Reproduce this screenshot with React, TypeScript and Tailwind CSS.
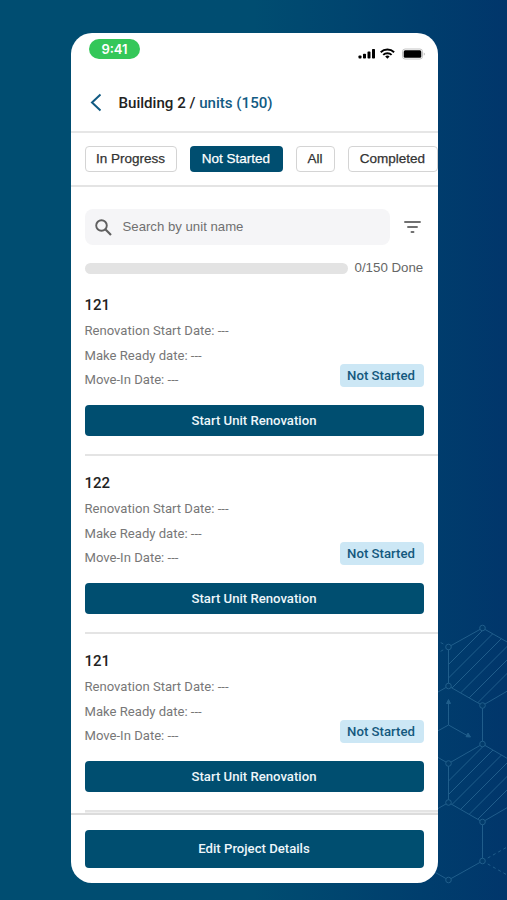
const units = ["121", "122", "121"];

const tabs = [
  { label: "In Progress", size: "w-[92px]" },
  { label: "Not Started", size: "w-[93px]", active: true },
  { label: "All", size: "w-[39px]" },
  { label: "Completed", size: "w-[90px]" },
];

function StatusIcons() {
  return (
    <svg width="68" height="14" viewBox="0 0 68 14" fill="#000">
      {/* Signal */}
      <rect x="0.5" y="8.5" width="3" height="3" rx="0.8" />
      <rect x="5" y="6.8" width="3" height="4.7" rx="0.8" />
      <rect x="9.5" y="4.6" width="3" height="6.9" rx="0.8" />
      <rect x="14" y="2" width="3" height="9.5" rx="0.8" />
      {/* Wifi */}
      <g fill="none" stroke="#000" strokeWidth="1.9">
        <path d="M22.7 5.2a9.6 9.6 0 0 1 13.4 0" />
        <path d="M25.2 7.9a6 6 0 0 1 8.4 0" />
      </g>
      <path d="M27.2 9.6a3.2 3.2 0 0 1 4.4 0l-2.2 2.2z" />
      {/* Battery */}
      <rect x="44.5" y="2" width="20" height="10" rx="2.6" fill="none" stroke="#c4c4c4" />
      <rect x="45.7" y="3.3" width="17.6" height="7.4" rx="1.5" />
      <path d="M65.8 5.4c1.2.5 1.2 2.7 0 3.2z" fill="#a8a8a8" />
    </svg>
  );
}

function Pattern() {
  const nodes = [
    [57.5, 18], [23.5, 37], [23.5, 76], [57.5, 95.5], [57.5, 134],
    [23.5, 153.5], [23.5, 192.5], [57.5, 212], [57.5, 251], [23.5, 270],
  ];
  return (
    <svg
      className="absolute right-0 bottom-0"
      width="82"
      height="290"
      viewBox="0 0 82 290"
      fill="none"
      stroke="#2b6a96"
      strokeWidth="1"
      opacity="0.75"
    >
      <defs>
        <clipPath id="hexTop">
          <path d="M57.5 18 91.5 37V76L57.5 95.5 23.5 76V37z" />
        </clipPath>
        <clipPath id="hexBottom">
          <path d="M57.5 134 91.5 153.5V192.5L57.5 212 23.5 192.5V153.5z" />
        </clipPath>
      </defs>
      <path d="M91 37 57.5 18 23.5 37V76L57.5 95.5 91 76M57.5 95.5V134L91 153.5M57.5 134 23.5 153.5V192.5L57.5 212 91 192.5M57.5 212V251L23.5 270 0 256.5M23.5 76 0 89.5M23.5 153.5 0 140M23.5 192.5 0 206" />
      <path d="M23.5 37 0 23.5M23.5 37 0 50M57.5 251 91 232M57.5 251 91 270" strokeDasharray="3 3" />
      <g clipPath="url(#hexTop)">
        {[78, 91.5, 105, 118.5, 132, 145.5].map((n) => (
          <path key={n} d={`M0 ${n}L100 ${n - 100}`} />
        ))}
      </g>
      <g clipPath="url(#hexBottom)">
        {[194.5, 208, 221.5, 235, 248.5, 262].map((n) => (
          <path key={n} d={`M0 ${n}L100 ${n - 100}`} />
        ))}
      </g>
      <path d="M23.5 92V115L43 126M23.5 115 0 128" />
      <path d="M23.5 89.5 21.5 93.5H25.5zM45.5 127 41 126.7 43 123z" fill="#2b6a96" />
      {nodes.map(([x, y]) => (
        <circle key={`${x}-${y}`} cx={x} cy={y} r="2.8" fill="#033d6b" />
      ))}
    </svg>
  );
}

function UnitCard(props: { name: string }) {
  return (
    <div className="h-[178px] shrink-0 border-b-2 border-[#e4e4e4] pt-[16px] pr-[14px]">
      <p className="text-[15px] leading-[22px] font-medium text-[#222]">
        {props.name}
      </p>
      <div className="flex justify-between items-end mt-[3px]">
        <div className="text-[13.1px] leading-[24.5px] text-[#777]">
          <p>Renovation Start Date: ---</p>
          <p>Make Ready date: ---</p>
          <p>Move-In Date: ---</p>
        </div>
        <span className="mb-[6px] flex h-[23px] w-[84px] items-center justify-center rounded bg-[#cce7f5] pt-[2px] pr-px text-[13.2px] font-medium text-[#14597e]">
          Not Started
        </span>
      </div>
      <button className="mt-[12.5px] block h-[31px] w-full rounded bg-[#004e70] pt-px text-[13.15px] font-medium text-[#edf6fa]">
        Start Unit Renovation
      </button>
    </div>
  );
}

export default function App() {
  return (
    <div className="relative h-[900px] w-[507px] overflow-hidden bg-linear-to-r from-[#004d71] from-50% to-[#01366b] px-[70.5px] pt-[33px] font-['Roboto',sans-serif]">
      <Pattern />
      <div className="relative flex h-[850px] w-[367px] flex-col overflow-hidden rounded-[21px] bg-white">
        {/* Status bar */}
        <div className="flex h-[40px] shrink-0 items-start justify-between pt-[6px] pr-[11.5px] pl-[18.5px]">
          <span className="flex h-[20px] w-[51px] items-center justify-center rounded-full bg-[#34c759] pt-px font-['Inter',sans-serif] text-[13px] font-semibold text-white">
            9:41
          </span>
          <div className="mt-[8px]">
            <StatusIcons />
          </div>
        </div>

        {/* Header */}
        <div className="flex h-[60px] shrink-0 items-center border-b-2 border-[#e6e6e6] pt-px pl-[19.5px]">
          <svg width="12" height="19" viewBox="0 0 12 19" fill="none" stroke="#125b83" strokeWidth="2">
            <path d="M10.5 1.5 2 9.5l8.5 8" />
          </svg>
          <h1 className="ml-[16.5px] pt-px text-[15.1px] font-medium text-[#222]">
            Building 2 / <span className="text-[#125b83]">units (150)</span>
          </h1>
        </div>

        {/* Tabs */}
        <div className="flex h-[54px] shrink-0 items-center gap-[13px] border-b-2 border-[#e4e4e4] pl-[14px] font-['Liberation_Sans',sans-serif] text-[13.5px]">
          {tabs.map((tab) => (
            <button
              key={tab.label}
              className={
                tab.active
                  ? `${tab.size} h-[26px] shrink-0 rounded bg-[#004e70] pt-px text-white [-webkit-text-stroke:0.25px]`
                  : `${tab.size} h-[26px] shrink-0 rounded border border-[#d4d4d4] pt-px text-[#333] [-webkit-text-stroke:0.25px]`
              }
            >
              {tab.label}
            </button>
          ))}
        </div>

        {/* Search */}
        <div className="flex shrink-0 items-center pt-[22px] pl-[14px] font-['Liberation_Sans',sans-serif]">
          <div className="flex h-[36px] w-[305px] items-center rounded-lg bg-[#f5f5f7] pl-[10.5px]">
            <svg width="17" height="17" viewBox="0 0 17 17" fill="none" stroke="#606060" strokeWidth="1.9">
              <circle cx="6.5" cy="6.5" r="5.3" />
              <path d="m10.3 10.3 5.7 5.7" strokeWidth="2.2" />
            </svg>
            <span className="ml-[10.5px] text-[13.2px] text-[#707070]">Search by unit name</span>
          </div>
          <svg className="ml-[14px]" width="17" height="12" viewBox="0 0 17 12" fill="none" stroke="#707070" strokeWidth="1.9" strokeLinecap="round">
            <path d="M1 1h15M4 6h9M7.5 11h2" />
          </svg>
        </div>

        {/* Progress */}
        <div className="mt-[13px] flex h-[20px] shrink-0 items-center gap-[7px] pl-[14px] font-['Liberation_Sans',sans-serif] text-[13.3px] text-[#666]">
          <div className="h-[11px] w-[263px] rounded-md bg-[#e3e3e3]" />
          <span>0/150 Done</span>
        </div>

        {/* Units */}
        <div className="flex min-h-0 flex-1 flex-col overflow-hidden pl-[14px]">
          {units.map((name, i) => (
            <UnitCard key={i} name={name} />
          ))}
          <div className="h-px shrink-0 bg-[#f0f0f0]" />
        </div>

        {/* Footer */}
        <div className="h-[70px] shrink-0 border-t-2 border-[#dcdcdc] px-[14px] pt-[15px]">
          <button className="block h-[38px] w-full rounded bg-[#004e70] text-[13.15px] font-medium text-[#edf6fa]">
            Edit Project Details
          </button>
        </div>
      </div>
    </div>
  );
}
